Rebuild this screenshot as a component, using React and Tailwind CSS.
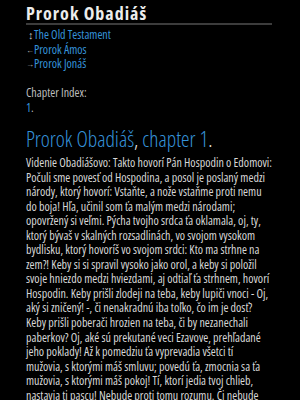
const TEXT =
  "Videnie Obadiášovo: Takto hovorí Pán Hospodin o Edomovi: Počuli sme povesť od Hospodina, a posol je poslaný medzi národy, ktorý hovorí: Vstaňte, a nože vstaňme proti nemu do boja! Hľa, učinil som ťa malým medzi národami; opovržený si veľmi. Pýcha tvojho srdca ťa oklamala, oj, ty, ktorý bývaš v skalných rozsadlinách, vo svojom vysokom bydlisku, ktorý hovoríš vo svojom srdci: Kto ma strhne na zem?! Keby si si spravil vysoko jako orol, a keby si položil svoje hniezdo medzi hviezdami, aj odtiaľ ťa strhnem, hovorí Hospodin. Keby prišli zlodeji na teba, keby lupiči vnoci - Oj, aký si zničený! -, či nenakradnú iba toľko, čo im je dosť? Keby prišli poberači hrozien na teba, či by nezanechali paberkov? Oj, aké sú prekutané veci Ezavove, prehľadané jeho poklady! Až k pomedziu ťa vyprevadia všetci tí mužovia, s ktorými máš smluvu; povedú ťa, zmocnia sa ťa mužovia, s ktorými máš pokoj! Tí, ktorí jedia tvoj chlieb, nastavia ti pascu! Nebude proti tomu rozumu. Či nebude tak v ten deň, hovorí Hospodin, že zahladím mudrcov z Edomu a rozumnosť z vrchu Ezavovho?";

export default function App() {
  return (
    <div className="h-[400px] w-[300px] overflow-hidden bg-black font-['Open_Sans',sans-serif] [font-stretch:condensed] text-[#d6d6d6]">
      <div className="mx-[26px] w-[246px]">
        <h1 className="pt-[3px] text-[18px] font-bold leading-[20px] tracking-[1px] text-[#ececec]">
          Prorok Obadiáš
        </h1>
        <div className="h-[2px] bg-[#3c3c3c]" />
        <div className="mt-[3px] flex flex-col text-[12px] leading-[14.5px]">
          <div className="flex items-center">
            <span className="w-[8px] pl-[2px] text-[11px] text-[#bdbdbd]">↕</span>
            <span className="text-[#3592d9]">The Old Testament</span>
          </div>
          <div className="flex items-center gap-[1px]">
            <span className="w-[7px] text-[8px] leading-[10px] text-[#bdbdbd]">←</span>
            <span className="text-[#3592d9]">Prorok Ámos</span>
          </div>
          <div className="flex items-center gap-[1px]">
            <span className="w-[7px] text-[8px] leading-[10px] text-[#bdbdbd]">→</span>
            <span className="text-[#3592d9]">Prorok Jonáš</span>
          </div>
        </div>
        <div className="mt-[14.5px] text-[12px] leading-[14.5px]">
          <div className="text-[#bdbdbd]">Chapter Index:</div>
          <div className="text-[#bdbdbd]">
            <span className="text-[#3592d9]">1</span>.
          </div>
        </div>
        <h2 className="mt-[12px] text-[21.5px] font-light leading-[24px] text-[#3592d9]">
          Prorok Obadiáš<span className="text-[#ececec]">,</span> chapter 1
          <span className="text-[#ececec]">.</span>
        </h2>
        <p className="mt-[5px] text-[12px] leading-[14.55px]">{TEXT}</p>
      </div>
    </div>
  );
}
